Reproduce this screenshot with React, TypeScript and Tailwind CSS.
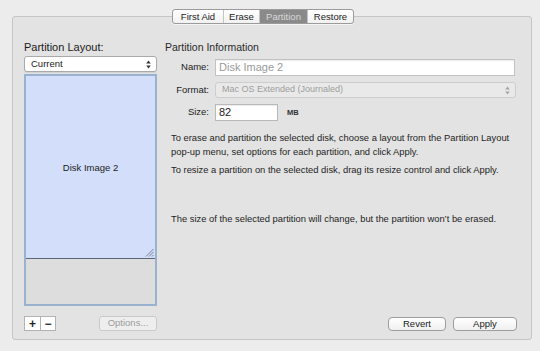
const FONT = { fontFamily: '"Liberation Sans", Arial, sans-serif' };

function UpDown({ color = '#333' }: { color?: string }) {
  return (
    <svg width="5" height="9" viewBox="0 0 5 9" fill={color}>
      <path d="M2.5 0.5 L4.8 3.5 L0.2 3.5 Z" />
      <path d="M2.5 8.5 L4.8 5.5 L0.2 5.5 Z" />
    </svg>
  );
}

function ResizeGrip() {
  return (
    <svg width="9" height="9" viewBox="0 0 9 9" stroke="#6b7684" strokeWidth="0.9">
      <line x1="1" y1="8.5" x2="8.5" y2="1" />
      <line x1="4" y1="8.5" x2="8.5" y2="4" />
      <line x1="7" y1="8.5" x2="8.5" y2="7" />
    </svg>
  );
}

const TABS = ['First Aid', 'Erase', 'Partition', 'Restore'];
const TAB_WIDTHS = ['w-[50px]', 'w-[36px]', 'w-[48px]', 'w-[46px]'];

export default function App() {
  return (
    <div className="w-[540px] h-[351px] bg-[#ececec] overflow-hidden text-[#1a1a1a]" style={FONT}>
      {/* Tab switcher */}
      <div className="relative z-10 flex pl-[172px] pt-[9px]">
        <div className="flex h-[15px] rounded-[3px] border border-[#9b9b9b] bg-gradient-to-b from-white to-[#f1f1f1] overflow-hidden shadow-[0_1px_0_rgba(255,255,255,0.6)]">
          {TABS.map((t, i) => (
            <div
              key={t}
              className={
                'flex items-center justify-center text-[9.5px] leading-none ' +
                TAB_WIDTHS[i] +
                (i > 0 ? ' border-l border-[#c3c3c3]' : '') +
                (t === 'Partition' ? ' bg-[#8a8a8a] text-[#d9d9d9] border-[#7a7a7a]' : ' text-[#1c1c1c]')
              }
            >
              {t}
            </div>
          ))}
        </div>
      </div>

      {/* Group box */}
      <div className="ml-[12px] -mt-[8px] w-[520px] h-[324px] rounded-[3px] border border-[#c6c6c6] bg-[#e3e3e3] flex gap-[8px] pl-[11px] pt-[24px]">
        {/* Left column */}
        <div className="w-[133px] flex flex-col">
          <div className="h-[13px] text-[11px] leading-[13px]">Partition Layout:</div>
          <div className="mt-[2px] h-[16px] rounded-[3px] border border-[#a9a9a9] bg-white flex items-center justify-between pl-[6px] pr-[5px] shadow-[0_1px_1px_rgba(0,0,0,0.08)]">
            <span className="text-[9.5px] leading-none">Current</span>
            <UpDown />
          </div>
          <div className="mt-[2px] h-[232px] border-2 border-[#98b2d0] flex flex-col">
            <div className="h-[183px] bg-[#d3dffa] border-b border-[#5c6673] flex flex-col">
              <div className="flex-1 flex items-center justify-center text-[9.5px] pt-[12px]">Disk Image 2</div>
              <div className="flex justify-end pr-[1px] pb-[1px]">
                <ResizeGrip />
              </div>
            </div>
            <div className="flex-1 bg-[#dddddd]" />
          </div>
          <div className="mt-[10px] flex items-center">
            <div className="flex h-[15px] border border-[#b3b3b3] bg-white">
              <div className="w-[15px] flex items-center justify-center text-[12px] leading-none font-bold text-[#222]">+</div>
              <div className="w-[15px] border-l border-[#b3b3b3] flex items-center justify-center text-[12px] leading-none font-bold text-[#333]">−</div>
            </div>
            <div className="ml-[43px] w-[61px] h-[15px] rounded-[3px] border border-[#c9c9c9] bg-[#eeeeee] flex items-center justify-center text-[9.5px] text-[#9c9c9c]">
              Options...
            </div>
          </div>
        </div>

        {/* Right column */}
        <div className="w-[353px] flex flex-col">
          <div className="h-[13px] text-[10.5px] leading-[13px] text-[#2a2a2a]">Partition Information</div>

          <div className="mt-[5px] flex items-center gap-[6px]">
            <div className="w-[44px] text-right text-[9.5px] text-[#222]">Name:</div>
            <div className="w-[300px] h-[17px] border border-[#c2c2c2] bg-white flex items-center pl-[3px] text-[11px] text-[#9a9a9a] shadow-[inset_0_1px_1px_rgba(0,0,0,0.08)]">
              Disk Image 2
            </div>
          </div>

          <div className="mt-[6px] flex items-center gap-[6px]">
            <div className="w-[44px] text-right text-[9.5px] text-[#222]">Format:</div>
            <div className="w-[301px] h-[16px] rounded-[3px] border border-[#cdcdcd] bg-[#e9e9e9] flex items-center justify-between pl-[6px] pr-[5px]">
              <span className="text-[9px] text-[#9d9d9d]">Mac OS Extended (Journaled)</span>
              <UpDown color="#a5a5a5" />
            </div>
          </div>

          <div className="mt-[6px] flex items-center gap-[6px]">
            <div className="w-[44px] text-right text-[9.5px] text-[#222]">Size:</div>
            <div className="w-[63px] h-[17px] border border-[#b9b9b9] bg-white flex items-center pl-[3px] text-[11px] shadow-[inset_0_1px_1px_rgba(0,0,0,0.08)]">
              82
            </div>
            <span className="ml-[3px] text-[7.5px] font-bold text-[#333]">MB</span>
          </div>

          <div className="pl-[6px] mt-[10px] text-[9.4px] leading-[14px] text-[#1e1e1e]">
            <p>
              To erase and partition the selected disk, choose a layout from the Partition Layout pop-up menu, set options
              for each partition, and click Apply.
            </p>
            <p className="mt-[4px]">To resize a partition on the selected disk, drag its resize control and click Apply.</p>
            <p className="mt-[35px]">The size of the selected partition will change, but the partition won’t be erased.</p>
          </div>

          <div className="mt-auto mb-[8px] flex justify-end gap-[7px] pr-[1px]">
            <div className="w-[58px] h-[14px] rounded-[4px] border border-[#9d9d9d] bg-gradient-to-b from-white to-[#f0f0f0] flex items-center justify-center text-[9.5px]">
              Revert
            </div>
            <div className="w-[64px] h-[14px] rounded-[4px] border border-[#9d9d9d] bg-gradient-to-b from-white to-[#f0f0f0] flex items-center justify-center text-[9.5px]">
              Apply
            </div>
          </div>
        </div>
      </div>
    </div>
  );
}
